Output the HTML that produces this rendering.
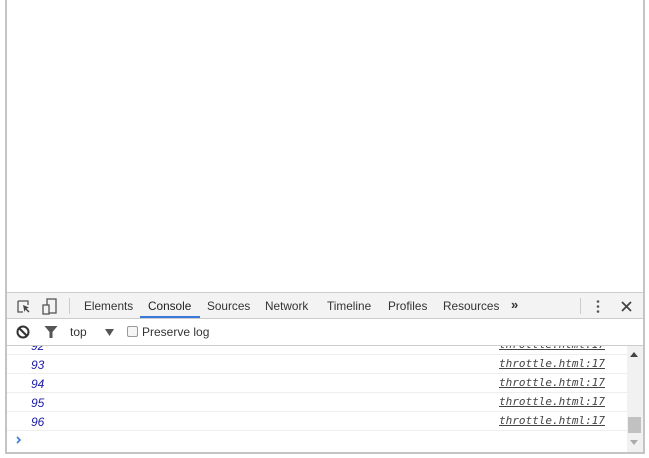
<!DOCTYPE html>
<html><head><style>
*{margin:0;padding:0;box-sizing:border-box}
body{width:649px;height:458px;background:#fff;position:relative;overflow:hidden;font-family:"Liberation Sans",sans-serif;font-size:12px;color:#333}
.win{position:absolute;left:5px;top:-2px;width:640px;height:456px;border:2px solid #c4c4c4;border-top:none;background:#fff}
.tb{position:absolute;left:7px;top:292px;width:636px;height:27px;background:#f3f3f3;border-top:1px solid #ccc;border-bottom:1px solid #ccc}
.tab{position:absolute;top:6px;font-size:11.8px;color:#333}
.tb2{position:absolute;left:7px;top:319px;width:636px;height:27px;background:#fff;border-bottom:1px solid #ccc}
.row{position:absolute;left:7px;width:620px;height:19px;border-bottom:1px solid #eee}
.num{position:absolute;left:24px;top:3px;font-style:italic;color:#1a1aa6;font-size:12px;font-family:"Liberation Sans",sans-serif}
.src{position:absolute;left:492px;top:2px;font-family:"DejaVu Sans Mono","Liberation Mono",monospace;font-style:italic;font-size:11px;color:#444;text-decoration:underline}
</style></head><body>
<div class="win"></div>
<div class="tb">
<svg style="position:absolute;left:9px;top:6px" width="16" height="16"><path d="M2 2h10v4M2 2v11h5" fill="none" stroke="#555" stroke-width="1.3"/><path d="M7 6l6 2.5-2.5 1 3 3-1 1-3-3-1 2.5z" fill="#444"/></svg>
<svg style="position:absolute;left:35px;top:5px" width="16" height="18"><rect x="5" y="1" width="9" height="14" fill="none" stroke="#555" stroke-width="1.3"/><rect x="1" y="7" width="6" height="9" fill="#f3f3f3" stroke="#555" stroke-width="1.3"/></svg>
<div style="position:absolute;left:62px;top:5px;width:1px;height:16px;background:#ccc"></div>
<span class="tab" style="left:77px">Elements</span>
<span class="tab" style="left:141px;color:#222">Console</span>
<div style="position:absolute;left:133px;top:23px;width:60px;height:2px;background:#3879d9"></div>
<span class="tab" style="left:200px">Sources</span>
<span class="tab" style="left:258px">Network</span>
<span class="tab" style="left:320px">Timeline</span>
<span class="tab" style="left:381px">Profiles</span>
<span class="tab" style="left:436px">Resources</span>
<span class="tab" style="left:504px;font-weight:bold;top:4px;font-size:13px">»</span>
<div style="position:absolute;left:573px;top:5px;width:1px;height:16px;background:#ccc"></div>
<svg style="position:absolute;left:588px;top:6px" width="6" height="16"><circle cx="3" cy="2.5" r="1.3" fill="#555"/><circle cx="3" cy="7.5" r="1.3" fill="#555"/><circle cx="3" cy="12.5" r="1.3" fill="#555"/></svg>
<svg style="position:absolute;left:614px;top:8px" width="11" height="11"><path d="M1 1l9 9M10 1l-9 9" stroke="#444" stroke-width="1.8"/></svg>
</div>
<div class="row" style="top:336px"><span class="num">92</span><span class="src">throttle.html:17</span></div>
<div class="tb2" style="z-index:2">
<svg style="position:absolute;left:9px;top:6px" width="14" height="14"><circle cx="7" cy="7" r="5.5" fill="none" stroke="#333" stroke-width="2"/><path d="M3 3l8 8" stroke="#333" stroke-width="2"/></svg>
<svg style="position:absolute;left:37px;top:6px" width="14" height="14"><path d="M0.5 1h13l-5 6v6h-3v-6z" fill="#555"/></svg>
<span style="position:absolute;left:63px;top:6px">top</span>
<svg style="position:absolute;left:98px;top:10px" width="9" height="8"><path d="M0 0h9l-4.5 7z" fill="#555"/></svg>
<div style="position:absolute;left:120px;top:7px;width:11px;height:11px;border:1px solid #999;border-radius:2px;background:#f5f5f5"></div>
<span style="position:absolute;left:135px;top:6px">Preserve log</span>
</div>
<div class="row" style="top:355px"><span class="num">93</span><span class="src">throttle.html:17</span></div>
<div class="row" style="top:374px"><span class="num">94</span><span class="src">throttle.html:17</span></div>
<div class="row" style="top:393px"><span class="num">95</span><span class="src">throttle.html:17</span></div>
<div class="row" style="top:412px"><span class="num">96</span><span class="src">throttle.html:17</span></div>
<svg style="position:absolute;left:16px;top:436px" width="6" height="8"><path d="M1 1l3 3-3 3" fill="none" stroke="#3879d9" stroke-width="1.6"/></svg>
<div style="position:absolute;left:627px;top:346px;width:16px;height:106px;background:#f1f1f1"></div>
<svg style="position:absolute;left:630px;top:352px" width="9" height="6"><path d="M0 5h8L4 0z" fill="#444"/></svg>
<div style="position:absolute;left:628px;top:417px;width:13px;height:16px;background:#c1c1c1"></div>
<svg style="position:absolute;left:630px;top:440px" width="9" height="6"><path d="M0 0h8L4 5z" fill="#aaa"/></svg>
</body></html>
